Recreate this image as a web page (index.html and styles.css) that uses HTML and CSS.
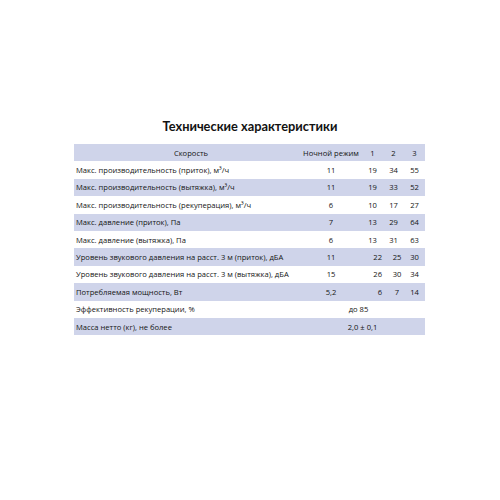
FILE: index.html
```html
<!DOCTYPE html>
<html lang="ru">
<head>
<meta charset="utf-8">
<link rel="stylesheet" href="styles.css">
</head>
<body>
<div class="page">
  <h1 class="title">Технические характеристики</h1>
  <table class="specs">
    <colgroup>
      <col class="c-label"><col class="c-night"><col class="c-n"><col class="c-n"><col class="c-n">
    </colgroup>
    <thead>
      <tr class="alt"><th class="label-head">Скорость</th><th class="night">Ночной режим</th><th>1</th><th>2</th><th>3</th></tr>
    </thead>
    <tbody>
      <tr><td class="label">Макс. производительность (приток), м³/ч</td><td class="night">11</td><td>19</td><td>34</td><td>55</td></tr>
      <tr class="alt"><td class="label">Макс. производительность (вытяжка), м³/ч</td><td class="night">11</td><td>19</td><td>33</td><td>52</td></tr>
      <tr><td class="label">Макс. производительность (рекуперация), м³/ч</td><td class="night">6</td><td>10</td><td>17</td><td>27</td></tr>
      <tr class="alt"><td class="label">Макс. давление (приток), Па</td><td class="night">7</td><td>13</td><td>29</td><td>64</td></tr>
      <tr><td class="label">Макс. давление (вытяжка), Па</td><td class="night">6</td><td>13</td><td>31</td><td>63</td></tr>
      <tr class="alt shift"><td class="label">Уровень звукового давления на расст. 3 м (приток), дБА</td><td class="night">11</td><td>22</td><td>25</td><td>30</td></tr>
      <tr class="shift"><td class="label">Уровень звукового давления на расст. 3 м (вытяжка), дБА</td><td class="night">15</td><td>26</td><td>30</td><td>34</td></tr>
      <tr class="alt shift"><td class="label">Потребляемая мощность, Вт</td><td class="night">5,2</td><td>6</td><td>7</td><td>14</td></tr>
      <tr><td class="label">Эффективность рекуперации, %</td><td class="span span-a" colspan="4">до 85</td></tr>
      <tr class="alt"><td class="label">Масса нетто (кг), не более</td><td class="span" colspan="4">2,0 ± 0,1</td></tr>
    </tbody>
  </table>
</div>
</body>
</html>
```

FILE: styles.css
```css
html, body {
  margin: 0;
  padding: 0;
  background: #ffffff;
}

.page {
  width: 500px;
  height: 500px;
  padding-top: 117px;
  box-sizing: border-box;
  display: flex;
  flex-direction: column;
  align-items: center;
  font-family: "Open Sans", "Liberation Sans", sans-serif;
  color: #141414;
}

.title {
  margin: 0 0 9px 0;
  font-family: "Lato", "Open Sans", sans-serif;
  font-size: 12.8px;
  line-height: 18px;
  font-weight: 700;
  color: #121212;
}

.specs {
  width: 351px;
  border-collapse: collapse;
  table-layout: fixed;
  font-size: 7.6px;
  margin-left: -1px;
}

.c-label { width: 226px; }
.c-night { width: 62px; }
.c-n { width: 21px; }

.specs tr { height: 17.4px; }
.specs tr.alt { background: #cfd4ea; }

.specs th, .specs td {
  padding: 0;
  font-weight: 500;
  white-space: nowrap;
  text-align: center;
  vertical-align: middle;
}

.specs .label { text-align: left; padding-left: 2px; }
.specs .label-head { text-align: center; padding-left: 8px; }
.specs .night { text-align: center; }
.specs .span { text-align: center; }
.specs .span-a { padding-right: 8px; }

.specs .shift td:nth-child(3) { text-align: right; padding-right: 1px; }
.specs .shift td:nth-child(4) { padding-left: 7px; }
```
